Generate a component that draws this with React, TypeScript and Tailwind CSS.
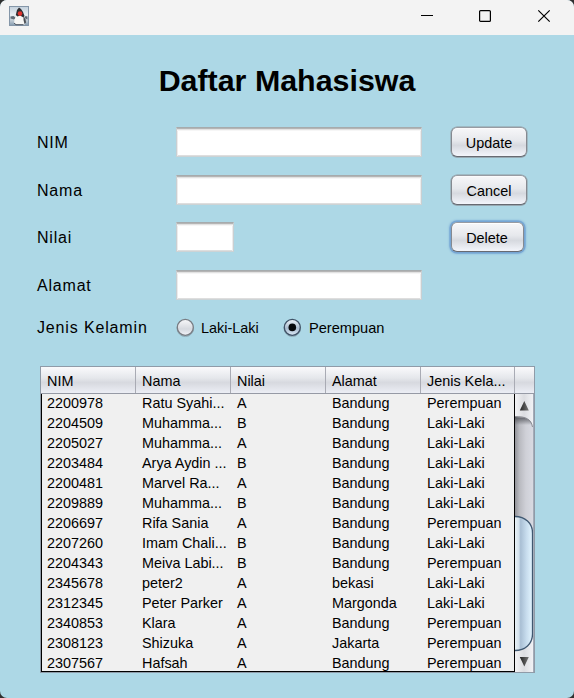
import React from "react";

const columns = ["NIM", "Nama", "Nilai", "Alamat", "Jenis Kela..."];

const students = [
  ["2200978", "Ratu Syahi...", "A", "Bandung", "Perempuan"],
  ["2204509", "Muhamma...", "B", "Bandung", "Laki-Laki"],
  ["2205027", "Muhamma...", "A", "Bandung", "Laki-Laki"],
  ["2203484", "Arya Aydin ...", "B", "Bandung", "Laki-Laki"],
  ["2200481", "Marvel Ra...", "A", "Bandung", "Laki-Laki"],
  ["2209889", "Muhamma...", "B", "Bandung", "Laki-Laki"],
  ["2206697", "Rifa Sania", "A", "Bandung", "Perempuan"],
  ["2207260", "Imam Chali...", "B", "Bandung", "Laki-Laki"],
  ["2204343", "Meiva Labi...", "B", "Bandung", "Perempuan"],
  ["2345678", "peter2", "A", "bekasi", "Laki-Laki"],
  ["2312345", "Peter Parker", "A", "Margonda", "Laki-Laki"],
  ["2340853", "Klara", "A", "Bandung", "Perempuan"],
  ["2308123", "Shizuka", "A", "Jakarta", "Perempuan"],
  ["2307567", "Hafsah", "A", "Bandung", "Perempuan"],
];

function JavaIcon() {
  return (
    <svg width="20" height="20" viewBox="0 0 20 20">
      <defs>
        <linearGradient id="sky" x1="0" y1="0" x2="0" y2="1">
          <stop offset="0" stopColor="#c3d0dc" />
          <stop offset=".45" stopColor="#e9eff3" />
          <stop offset=".8" stopColor="#b3c0cb" />
          <stop offset="1" stopColor="#8299ae" />
        </linearGradient>
        <filter id="soft"><feGaussianBlur stdDeviation=".45" /></filter>
      </defs>
      <rect x=".5" y=".5" width="19" height="19" fill="url(#sky)" stroke="#8496a8" />
      <g filter="url(#soft)">
        <path d="M1.500 10.500l3-.5 2.500 2-2 1.500-3.500-1zM18.500 10.500l-2-.5-1 2 3 1.500z" fill="#5f6b76" />
        <path d="M7.500 9L5.500 13.500 5 17l2.500 1.800h8L16 16l-1.500-7z" fill="#f6f6f4" />
        <path d="M10 1.500L8 4 6.800 9 8.500 10.500 11 9.500l3.500 2 1-1.500-1.500-4L12 3z" fill="#2e2e33" />
        <path d="M14.500 10l2 3.500.5 3-1.500 1.500-1-4z" fill="#4a4d52" />
        <path d="M5 17l2 1.700h7.500" fill="none" stroke="#4d5660" />
        <circle cx="11" cy="7.600" r="2.300" fill="#e0342e" />
      </g>
    </svg>
  );
}

function TitleBar() {
  return (
    <div className="flex h-[35px] items-start justify-between bg-[#f3f3f3] pl-[9px]">
      <div className="pt-[6px]"><JavaIcon /></div>
      <div className="flex gap-[44px] pt-[9px] pr-[23px]">
        <svg width="14" height="14" viewBox="0 0 14 14" stroke="#000"><path d="M0 6.5h12" /></svg>
        <svg width="14" height="14" viewBox="0 0 14 14" fill="none" stroke="#000" strokeWidth="1.2"><rect x=".6" y="1.6" width="10.8" height="10.8" rx="1" /></svg>
        <svg width="14" height="14" viewBox="0 0 14 14" stroke="#000" strokeWidth="1.2"><path d="M1.300 1.300l11.400 11.400M12.700 1.300L1.300 12.700" /></svg>
      </div>
    </div>
  );
}

function Field({ width }: { width: string }) {
  return (
    <input
      className={`${width} h-[30px] border border-x-[#c9cfd2] border-t-[#a6abad] border-b-[#cdd3d5] bg-white shadow-[inset_0_1px_0_#b5b5b5,inset_0_2px_0_#e2e2e2,inset_0_3px_0_#f6f6f6,inset_1px_0_0_#ececec,inset_-1px_0_0_#ececec,inset_0_-1px_0_#dedede] outline-none`}
    />
  );
}

function PushButton({ label, width, focused }: { label: string; width: string; focused?: boolean }) {
  const ring = focused
    ? "pt-px pr-px shadow-[0_0_0_1.5px_#76a5d3,0_0_2px_2px_#86b5db,inset_0_1px_0_#fff]"
    : "pt-[2px] shadow-[0_0_0_0.5px_#8f99a0,0_1px_0_#9eb9c4,inset_0_1px_0_#fbfbfc]";
  return (
    <button
      className={`${width} ${ring} ml-px flex h-[30px] items-center justify-center rounded-[6px] border border-x-[#858990] border-t-[#989ba2] border-b-[#676a72] bg-[linear-gradient(#f7f7f9,#e6e8ec_45%,#d6d9df_62%,#f3f5fb_100%)] text-[14.4px] leading-[18px]`}
    >
      {label}
    </button>
  );
}

function FormRow({ label, width, children }: { label: string; width: string; children?: React.ReactNode }) {
  return (
    <div className="flex h-[47.5px] items-start">
      <label className="w-[139px] text-[16px] leading-[31px] tracking-[0.8px]">{label}</label>
      <div className="w-[274px]"><Field width={width} /></div>
      {children}
    </div>
  );
}

function Radio({ selected }: { selected?: boolean }) {
  return (
    <svg width="20" height="20" viewBox="0 0 20 20">
      <defs>
        <linearGradient id="radioOff" x1="0" y1="0" x2="0" y2="1">
          <stop offset="0" stopColor="#f8f8fa" />
          <stop offset=".6" stopColor="#d6d9df" />
          <stop offset="1" stopColor="#f2f4fa" />
        </linearGradient>
        <linearGradient id="radioOn" x1="0" y1="0" x2="0" y2="1">
          <stop offset="0" stopColor="#f0f5f9" />
          <stop offset=".55" stopColor="#a9bccf" />
          <stop offset="1" stopColor="#dbeaf8" />
        </linearGradient>
      </defs>
      <circle cx="10.3" cy="10.3" r="8.3" fill="none" stroke="#8ca9b6" strokeWidth=".9" />
      <circle cx="10.3" cy="9.4" r="8" fill={selected ? "url(#radioOn)" : "url(#radioOff)"} stroke={selected ? "#3f5267" : "#787c83"} strokeWidth="1.3" />
      {selected && <circle cx="10.3" cy="9.4" r="3.8" fill="#07090b" />}
    </svg>
  );
}

function ScrollBar() {
  return (
    <svg width="18" height="278" viewBox="0 0 18 278">
      <defs>
        <linearGradient id="track">
          <stop offset="0" stopColor="#929399" />
          <stop offset=".25" stopColor="#b9bac0" />
          <stop offset=".6" stopColor="#cfd0d7" />
          <stop offset="1" stopColor="#d8dae2" />
        </linearGradient>
        <linearGradient id="thumb">
          <stop offset="0" stopColor="#e9f2f7" />
          <stop offset=".22" stopColor="#d3e1ec" />
          <stop offset=".32" stopColor="#a9bfd4" />
          <stop offset=".65" stopColor="#c7dced" />
          <stop offset="1" stopColor="#e3f5ff" />
        </linearGradient>
        <linearGradient id="cap">
          <stop offset="0" stopColor="#f3f3f5" />
          <stop offset=".5" stopColor="#dcdde1" />
          <stop offset="1" stopColor="#f1f2f5" />
        </linearGradient>
        <linearGradient id="capShade" x1="0" y1="0" x2="0" y2="1">
          <stop offset="0" stopColor="#505258" />
          <stop offset="1" stopColor="#505258" stopOpacity="0" />
        </linearGradient>
        <linearGradient id="arrow">
          <stop offset="0" stopColor="#242424" />
          <stop offset="1" stopColor="#777" />
        </linearGradient>
      </defs>
      <rect width="18" height="278" fill="url(#track)" />
      <rect y="22" width="18" height="9" fill="url(#capShade)" />
      <path d="M0 0h18v33C17 26 12 23 0 23z" fill="url(#cap)" />
      <path d="M0 22.500C11 22.500 16 25 17.500 33" fill="none" stroke="#777980" strokeWidth=".8" />
      <path d="M0 278V256.500C12 256.500 17 250 18 240v38z" fill="url(#cap)" />
      <path d="M0 122.500C10 122.500 17.500 129 17.500 139V240C17.500 250 10 256.500 0 256.500z" fill="url(#thumb)" />
      <path d="M0 122.500C10 122.500 17.500 129 17.500 139V240C17.500 250 10 256.500 0 256.500" fill="none" stroke="#3f5871" strokeWidth="1.3" />
      <path d="M4.800 16.500L9.300 7 13.800 16.500zM4.800 263L9.300 272.500 13.800 263z" fill="url(#arrow)" />
    </svg>
  );
}

function StudentTable() {
  return (
    <div className="mt-[27px] ml-[3px] h-[307px] w-[495px] border border-[#8f9ba8] text-[14.4px]">
      <div className="flex h-[27px] border-b border-[#969aa5] bg-[linear-gradient(#fafafc,#e5e7eb_42%,#d7d9df_60%,#eceef5_100%)]">
        {columns.map((name, i) => (
          <div key={name} className={`${i === 4 ? "w-[94px]" : "w-[95px]"} shrink-0 border-r border-[#a9abb4] pl-[6px] leading-[29px]`}>{name}</div>
        ))}
      </div>
      <div className="flex h-[278px]">
        <div className="h-[278px] w-[474px] overflow-hidden border-x border-b border-black bg-[#f0f0f0]">
          {students.map((row) => (
            <div key={row[0]} className="flex h-[20px] leading-[18px]">
              {row.map((cell, i) => (
                <span key={i} className="w-[95px] shrink-0 pl-[5px] whitespace-nowrap">{cell}</span>
              ))}
            </div>
          ))}
        </div>
        <ScrollBar />
        <div className="w-px bg-[#a3abb7]" />
      </div>
    </div>
  );
}

export default function App() {
  return (
    <div className="h-[698px] w-[574px] overflow-hidden bg-[#303030] font-['Liberation_Sans',Arial,sans-serif] text-black">
      <div className="h-[698px] overflow-hidden rounded-[7px] bg-[#add8e6]">
        <TitleBar />
        <main className="px-[37px]">
          <h1 className="pt-[25px] text-center text-[30.4px] leading-[40px] font-bold">Daftar Mahasiswa</h1>
          <div className="pt-[27px]">
            <FormRow label="NIM" width="w-[246px]"><PushButton label="Update" width="w-[76px]" /></FormRow>
            <FormRow label="Nama" width="w-[246px]"><PushButton label="Cancel" width="w-[76px]" /></FormRow>
            <FormRow label="Nilai" width="w-[58px]"><PushButton label="Delete" width="w-[73px]" focused /></FormRow>
            <FormRow label="Alamat" width="w-[246px]" />
          </div>
          <div className="flex h-[22px] items-center text-[14.4px]">
            <span className="w-[138px] text-[16px] tracking-[0.85px] whitespace-nowrap">Jenis Kelamin</span>
            <label className="flex w-[107px] items-center gap-[6px]"><Radio /><span className="pt-px">Laki-Laki</span></label>
            <label className="flex items-center gap-[7px]"><Radio selected /><span className="pt-px text-[14.6px]">Perempuan</span></label>
          </div>
          <StudentTable />
        </main>
      </div>
    </div>
  );
}
